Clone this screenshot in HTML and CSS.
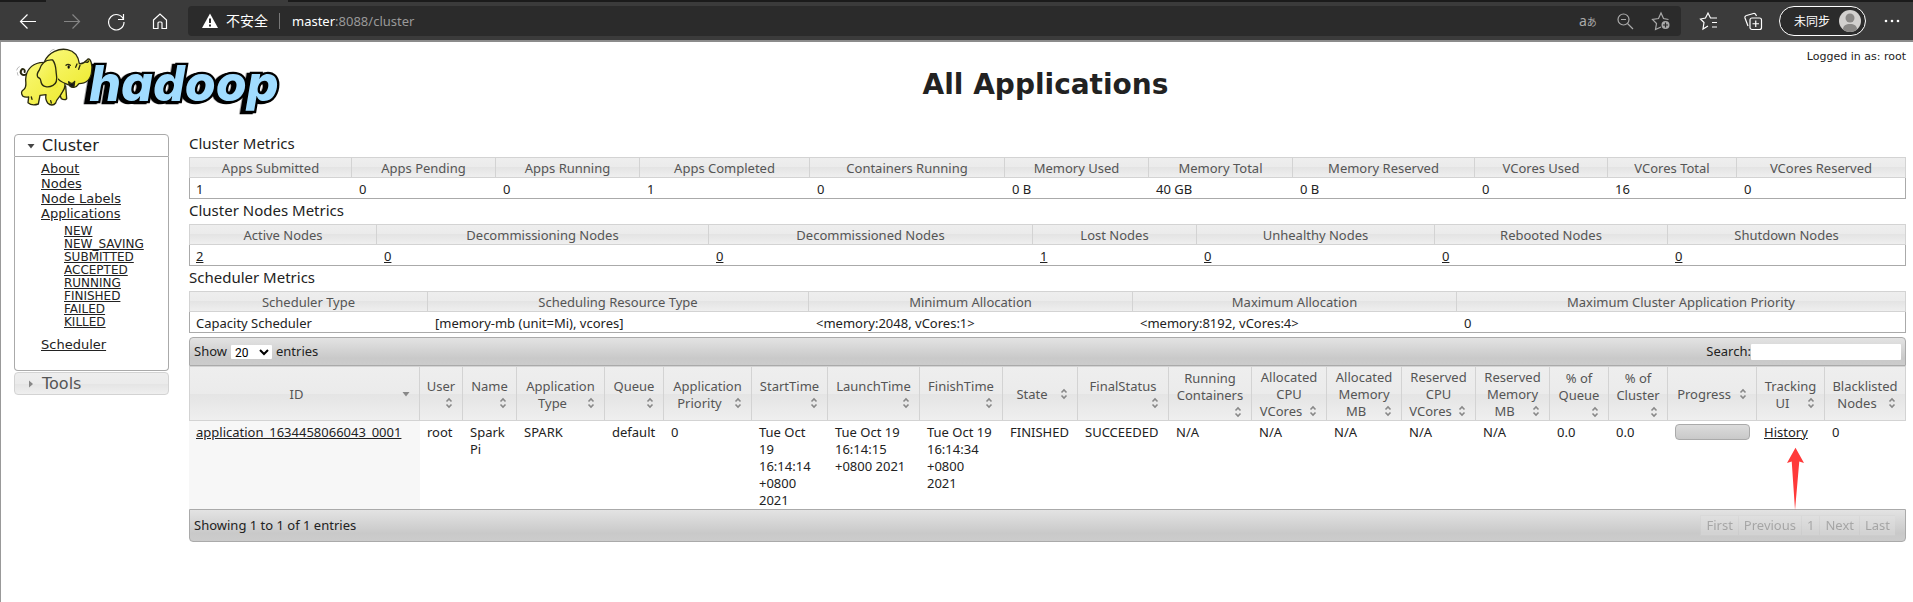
FILE: index.html
```html
<!DOCTYPE html>
<html lang="en">
<head>
<meta charset="utf-8">
<title>All Applications</title>
<link rel="stylesheet" href="styles.css">
</head>
<body>
<svg class="defs" aria-hidden="true">
  <symbol id="sort" viewBox="0 0 16 16"><path d="M5.500 6.500 8 4l2.500 2.500M5.500 9.500 8 12l2.500-2.500" fill="none" stroke="#888" stroke-width="1.600"/></symbol>
  <symbol id="down" viewBox="0 0 16 16"><path d="M4.500 6h7L8 10.500z"/></symbol>
  <symbol id="right" viewBox="0 0 16 16"><path d="M6 4.500v7L10 8z"/></symbol>
</svg>

<div class="browser">
  <div class="tabs"></div>
  <nav class="toolbar" aria-label="Browser">
    <button class="tool" aria-label="Back"><svg viewBox="0 0 20 20"><path d="M18 10.500H2.500M9.500 3.500l-7 7 7 7"/></svg></button>
    <button class="tool dim" aria-label="Forward"><svg viewBox="0 0 20 20"><path d="M2 10.500h15.500M10.500 3.500l7 7-7 7"/></svg></button>
    <button class="tool" aria-label="Reload"><svg viewBox="0 0 20 20"><path d="M17.500 8.500A7.700 7.700 0 1 0 18 11M17.500 3v5.500H12"/></svg></button>
    <button class="tool" aria-label="Home"><svg viewBox="0 0 20 20"><path d="M3.500 9 10 3l6.500 6v8.500h-4.500V12a1 1 0 0 0-1-1H9a1 1 0 0 0-1 1v5.500H3.500z"/></svg></button>
    <div class="address">
      <svg class="warn" viewBox="0 0 18 18"><path fill="#fff" d="M9 1.500 17 16H1z"/><path stroke="#2b2b2b" stroke-width="2" d="M9 6.500V11M9 12.500v2"/></svg>
      <span class="insecure">不安全</span>
      <span class="url"><b>master</b>:8088/cluster</span>
      <button class="tool grey" aria-label="Translate"><span class="translate">a<small>あ</small></span></button>
      <button class="tool grey" aria-label="Zoom out"><svg viewBox="0 0 20 20"><circle cx="8.500" cy="8.500" r="5.500"/><path d="M6 8.500h5M12.500 12.500 18 18"/></svg></button>
      <button class="tool grey" aria-label="Add favorite"><svg viewBox="0 0 20 20"><path d="M10 16l-5.500 2.500 1-6L1.500 8.500l6-1L10 2l2.500 5.500 5 1"/><circle cx="14.500" cy="14" r="4" fill="#aaa" stroke="none"/><path stroke="#2b2b2b" d="M14.500 11.500v5M12 14h5"/></svg></button>
    </div>
    <button class="tool" aria-label="Favorites"><svg viewBox="0 0 20 20"><path d="M9 15l-5 3 1-6.500L1.500 8l5-1L9 2l2.500 5H18M13 11.500h5M13 16h5"/></svg></button>
    <button class="tool" aria-label="Collections"><svg viewBox="0 0 20 20"><rect x="7" y="7" width="11.500" height="11.500" rx="2"/><path d="M12.750 9.500v6.500M9.500 12.750H16M5 15 2 7a2 2 0 0 1 1.500-2.500l7-2a2 2 0 0 1 2.500 1.500l.5 1"/></svg></button>
    <button class="profile"><span>未同步</span><svg viewBox="0 0 22 22"><circle cx="11" cy="11" r="11" fill="#d2d0ce"/><circle cx="11" cy="8" r="4.500" fill="#8a8886"/><path fill="#8a8886" d="M4 19.500c0-4 3-5.500 7-5.500s7 1.500 7 5.500a11 11 0 0 1-14 0z"/></svg></button>
    <button class="tool" aria-label="More"><svg viewBox="0 0 20 20"><g fill="#fff" stroke="none"><circle cx="4" cy="10" r="1.300"/><circle cx="10" cy="10" r="1.300"/><circle cx="16" cy="10" r="1.300"/></g></svg></button>
  </nav>
</div>

<div class="page">
  <header class="head">
    <svg class="logo" viewBox="12 12 816 216" role="img" aria-label="hadoop">
      <defs><linearGradient id="skin" x1="0" y1="0" x2="1" y2="1"><stop offset="0" stop-color="#faf97a"/><stop offset="1" stop-color="#eeea30"/></linearGradient></defs>
      <text class="wordmark" x="238" y="176">hadoop</text>
      <g fill="url(#skin)" stroke="#2a2a10" stroke-width="4" stroke-linejoin="round" stroke-linecap="round">
        <path fill="none" stroke-width="6" d="M50 96C38 104 28 94 34 84c4-6 12-2 10 6"/>
        <path d="M146 148l8 22q10 6 16 0l-3-38z"/>
        <path d="M90 62C62 68 48 88 47 112c0 12 4 22-5 30-8 4-10 12-4 20 6 5 12 4 18 3l-2 17c8 7 22 7 31 4l5-26 18-2c-2 10-2 16 5 25 8 8 18 8 24 0 2-12 10-14 16-26 4-8 12-14 12-28l-10-70z"/>
        <path d="M104 58C116 30 148 18 172 23c20 4 33 20 36 42 14 2 20-8 26-14 8-2 14 18 11 36-2 26-18 38-38 38-8 12-22 16-30 4-10-5-28-8-38-24z"/>
        <path stroke="none" d="M100 66h44v70l-24 14h-20z"/>
        <path fill="#171717" d="M176 119c6 8 14 6 18-1l-2 15c-8 6-16-2-16-14z"/>
        <path d="M128 54C108 52 94 64 88 84c-6 8-10 14-4 22 6 3 8 4 9 14 4 16 22 18 36 10 12-6 13-18 10-34-2-14 0-28-11-42z"/>
        <path fill="none" d="M168 70q6-6 13 0M201 66l-4 10M210 70l-4 12M64 165l2 7M122 176l2 7M226 60q8 3 10-3"/>
        <ellipse cx="176" cy="75" rx="3.500" ry="5" fill="#111" stroke="none"/>
        <path fill="none" stroke="#999" stroke-width="2" d="M120 30q4-8 12-8M20 84q2-8 8-10M24 100q-2-4-2-8"/>
      </g>
    </svg>
    <div class="headline">
      <div class="login">Logged in as: root</div>
      <h1>All Applications</h1>
    </div>
  </header>

  <div class="body">
    <nav class="side" aria-label="Cluster">
      <h3 class="open"><svg><use href="#down"/></svg>Cluster</h3>
      <div class="menu">
        <ul>
          <li><a href="#">About</a></li>
          <li><a href="#">Nodes</a></li>
          <li><a href="#">Node Labels</a></li>
          <li><a href="#">Applications</a>
            <ul class="states">
              <li><a href="#">NEW</a></li>
              <li><a href="#">NEW_SAVING</a></li>
              <li><a href="#">SUBMITTED</a></li>
              <li><a href="#">ACCEPTED</a></li>
              <li><a href="#">RUNNING</a></li>
              <li><a href="#">FINISHED</a></li>
              <li><a href="#">FAILED</a></li>
              <li><a href="#">KILLED</a></li>
            </ul>
          </li>
          <li><a href="#">Scheduler</a></li>
        </ul>
      </div>
      <h3 class="closed"><svg><use href="#right"/></svg>Tools</h3>
    </nav>

    <main>
      <h2>Cluster Metrics</h2>
      <table class="metrics cluster">
        <thead><tr><th>Apps Submitted</th><th>Apps Pending</th><th>Apps Running</th><th>Apps Completed</th><th>Containers Running</th><th>Memory Used</th><th>Memory Total</th><th>Memory Reserved</th><th>VCores Used</th><th>VCores Total</th><th>VCores Reserved</th></tr></thead>
        <tbody><tr><td>1</td><td>0</td><td>0</td><td>1</td><td>0</td><td>0 B</td><td>40 GB</td><td>0 B</td><td>0</td><td>16</td><td>0</td></tr></tbody>
      </table>
      <h2>Cluster Nodes Metrics</h2>
      <table class="metrics nodes">
        <thead><tr><th>Active Nodes</th><th>Decommissioning Nodes</th><th>Decommissioned Nodes</th><th>Lost Nodes</th><th>Unhealthy Nodes</th><th>Rebooted Nodes</th><th>Shutdown Nodes</th></tr></thead>
        <tbody><tr><td><a href="#">2</a></td><td><a href="#">0</a></td><td><a href="#">0</a></td><td><a href="#">1</a></td><td><a href="#">0</a></td><td><a href="#">0</a></td><td><a href="#">0</a></td></tr></tbody>
      </table>
      <h2>Scheduler Metrics</h2>
      <table class="metrics scheduler">
        <thead><tr><th>Scheduler Type</th><th>Scheduling Resource Type</th><th>Minimum Allocation</th><th>Maximum Allocation</th><th>Maximum Cluster Application Priority</th></tr></thead>
        <tbody><tr><td>Capacity Scheduler</td><td>[memory-mb (unit=Mi), vcores]</td><td>&lt;memory:2048, vCores:1&gt;</td><td>&lt;memory:8192, vCores:4&gt;</td><td>0</td></tr></tbody>
      </table>

      <section class="apps-box">
        <div class="bar top">
          <label class="length">Show <select><option>20</option></select> entries</label>
          <label class="search">Search:<input type="text"></label>
        </div>
        <table class="apps">
          <thead><tr>
            <th>ID<svg><use href="#down"/></svg></th>
            <th>User<svg><use href="#sort"/></svg></th>
            <th>Name<svg><use href="#sort"/></svg></th>
            <th>Application Type<svg><use href="#sort"/></svg></th>
            <th>Queue<svg><use href="#sort"/></svg></th>
            <th>Application Priority<svg><use href="#sort"/></svg></th>
            <th>StartTime<svg><use href="#sort"/></svg></th>
            <th>LaunchTime<svg><use href="#sort"/></svg></th>
            <th>FinishTime<svg><use href="#sort"/></svg></th>
            <th>State<svg><use href="#sort"/></svg></th>
            <th>FinalStatus<svg><use href="#sort"/></svg></th>
            <th>Running Containers<svg><use href="#sort"/></svg></th>
            <th>Allocated CPU VCores<svg><use href="#sort"/></svg></th>
            <th>Allocated Memory MB<svg><use href="#sort"/></svg></th>
            <th>Reserved CPU VCores<svg><use href="#sort"/></svg></th>
            <th>Reserved Memory MB<svg><use href="#sort"/></svg></th>
            <th>% of Queue<svg><use href="#sort"/></svg></th>
            <th>% of Cluster<svg><use href="#sort"/></svg></th>
            <th>Progress<svg><use href="#sort"/></svg></th>
            <th>Tracking UI<svg><use href="#sort"/></svg></th>
            <th>Blacklisted Nodes<svg><use href="#sort"/></svg></th>
          </tr></thead>
          <tbody><tr>
            <td><a href="#">application_1634458066043_0001</a></td>
            <td>root</td><td>Spark Pi</td><td>SPARK</td><td>default</td><td>0</td>
            <td>Tue Oct 19 16:14:14 +0800 2021</td><td>Tue Oct 19 16:14:15 +0800 2021</td><td>Tue Oct 19 16:14:34 +0800 2021</td>
            <td>FINISHED</td><td>SUCCEEDED</td><td>N/A</td><td>N/A</td><td>N/A</td><td>N/A</td><td>N/A</td><td>0.0</td><td>0.0</td>
            <td><div class="progress"></div></td>
            <td class="tracking"><a href="#">History</a><svg class="arrow" viewBox="0 0 18 66"><path fill="#ff3a3a" d="M9 0l9 16-5-1.500L8.500 66 5 14.500 0 16z"/></svg></td>
            <td>0</td>
          </tr></tbody>
        </table>
        <div class="bar bottom">
          <span>Showing 1 to 1 of 1 entries</span>
          <div class="pages"><button disabled>First</button><button disabled>Previous</button><button disabled>1</button><button disabled>Next</button><button disabled>Last</button></div>
        </div>
      </section>
    </main>
  </div>
</div>
</body>
</html>
```

FILE: styles.css
```css
* { box-sizing: border-box; }
body { margin: 0; background: #fff; color: #222; font: 13px/17px "Noto Sans", "Noto Sans CJK SC", sans-serif; }
a { color: #222; text-decoration: underline; }
button { font: inherit; }
.defs { position: absolute; width: 0; height: 0; }

/* Browser bar */
.browser { background: #3b3b3b; border-bottom: 2px solid #8c8c8c; }
.tabs { height: 2px; background: linear-gradient(to right, #1b1b1b 46px, #3b3b3b 46px, #3b3b3b 288px, #1b1b1b 288px); }
.toolbar { display: flex; align-items: center; gap: 24px; padding: 4px 11px 4px 18px; }
.tool { flex: none; width: 20px; height: 20px; padding: 0; border: 0; background: none; color: #fff; }
.tool svg { display: block; width: 20px; height: 20px; fill: none; stroke: currentColor; stroke-width: 1.2; }
.dim { color: #858585; }
.grey { color: #aaa; }
.address { flex: 1; display: flex; align-items: center; height: 30px; margin: 0 -6px 0 -6px; padding: 0 10px 0 13px; border-radius: 4px; background: #2b2b2b; color: #999; }
.address .tool { margin-left: 16px; }
.warn { width: 18px; height: 18px; margin-right: 7px; }
.insecure { padding-right: 11px; border-right: 1px solid #777; color: #fff; font-size: 14px; line-height: 16px; }
.url { flex: 1; padding-left: 12px; }
.url b { color: #fff; font-weight: 400; }
.translate { display: flex; align-items: baseline; font-size: 14px; }
.translate small { font-size: 10px; }
.profile { display: flex; align-items: center; justify-content: space-between; width: 87px; height: 30px; margin: 0 -8px; padding: 0 4px 0 14px; border: 1px solid #fff; border-radius: 15px; background: #2b2b2b; color: #fff; font-size: 12px; white-space: nowrap; }
.profile svg { width: 22px; height: 22px; }

/* Page */
.page { min-height: calc(100vh - 42px); padding: 0 7px 0 13px; border-left: 1px solid #999; }
.head, .body { display: grid; grid-template-columns: 155px minmax(0, 1fr); column-gap: 20px; }
.head { height: 90px; }
.logo { width: 272px; height: 72px; margin-top: 4px; }
.wordmark { font: italic 800 150px Inter, sans-serif; fill: #a0dcff; stroke: #000; stroke-width: 14px; paint-order: stroke; filter: drop-shadow(-10px 3px 0 #000); }
.login { padding-top: 8px; text-align: right; font: 11px/14px "DejaVu Sans", sans-serif; }
h1 { margin: 0; padding-right: 4px; text-align: center; font: bold 28px/42px "DejaVu Sans", sans-serif; }

/* Sidebar */
.side { padding-top: 2px; font: 13px/15px "DejaVu Sans", sans-serif; }
.side h3 { display: flex; align-items: center; gap: 3px; height: 23px; margin: 0; padding-left: 8px; border: 1px solid #aaa; font-size: 16px; font-weight: 400; }
.side h3 svg { width: 16px; height: 16px; fill: #454545; }
.side .open { border-radius: 4px 4px 0 0; }
.side .closed { margin-top: 1px; border-color: #d3d3d3; border-radius: 4px; background: linear-gradient(#eee, #ebebeb 50%, #e4e4e4 50%, #efefef); color: #555; }
.side .closed svg { fill: #888; }
.menu { padding: 4px 0 18px 26px; border: 1px solid #aaa; border-top: 0; border-radius: 0 0 4px 4px; }
.menu ul { margin: 0; padding: 0; list-style: none; }
.menu .states { padding: 4px 0 8px 23px; font-size: 12px; line-height: 13px; }

/* Tables */
h2 { margin: 0; padding-bottom: 3px; font-size: 15px; line-height: 22px; font-weight: 400; }
table { width: 100%; border-collapse: separate; border-spacing: 0; table-layout: fixed; }
th { padding: 2px 5px 0; border: solid #d3d3d3; border-width: 1px 1px 1px 0; background: linear-gradient(#eee, #ebebeb 50%, #e4e4e4 50%, #efefef); color: #555; font-weight: 400; text-align: center; }
th:first-child { border-left-width: 1px; }
td { padding: 3px 7px 0; vertical-align: top; text-align: left; }
.metrics td { border-bottom: 1px solid #aaa; }
.metrics td:first-child { padding-left: 6px; border-left: 1px solid #aaa; }
.metrics td:last-child { border-right: 1px solid #aaa; }
.cluster th:nth-child(1) { width: 163px; }
.cluster th:nth-child(2), .cluster th:nth-child(3), .cluster th:nth-child(6), .cluster th:nth-child(7) { width: 144px; }
.cluster th:nth-child(4) { width: 170px; }
.cluster th:nth-child(5) { width: 195px; }
.cluster th:nth-child(8) { width: 182px; }
.cluster th:nth-child(9) { width: 133px; }
.cluster th:nth-child(10) { width: 129px; }
.nodes th:nth-child(1) { width: 188px; }
.nodes th:nth-child(2) { width: 332px; }
.nodes th:nth-child(3) { width: 324px; }
.nodes th:nth-child(4) { width: 164px; }
.nodes th:nth-child(5) { width: 238px; }
.nodes th:nth-child(6) { width: 233px; }
.scheduler th:nth-child(1) { width: 239px; }
.scheduler th:nth-child(2) { width: 381px; }
.scheduler th:nth-child(3), .scheduler th:nth-child(4) { width: 324px; }

/* Applications */
.apps-box { margin-top: 4px; }
.bar { display: flex; align-items: center; justify-content: space-between; border: 1px solid #aaa; background: linear-gradient(#e3e3e3, #c9c9c9 75%, #cccccc); }
.top { height: 29px; padding: 0 4px; border-radius: 4px 4px 0 0; }
.bottom { height: 33px; padding: 0 10px 0 4px; border-radius: 0 0 4px 4px; }
.length { display: flex; align-items: center; gap: 4px; }
.bar select { width: 41px; height: 14px; padding: 0; border: 0; border-radius: 1px; background: #fff; color: #000; font: 12px Roboto, sans-serif; }
.search { display: flex; align-items: center; }
.search input { width: 150px; height: 16px; padding: 0 2px; border: 0; border-radius: 1px; background: #fff; font: inherit; }
.apps th { height: 55px; }
.apps th svg { float: right; width: 16px; height: 16px; fill: #888; }
.apps td:first-child { background: #f7f7f7; }
.apps th:nth-child(1) { width: 231px; }
.apps th:nth-child(2) { width: 43px; }
.apps th:nth-child(3) { width: 54px; }
.apps th:nth-child(4), .apps th:nth-child(6) { width: 88px; }
.apps th:nth-child(5), .apps th:nth-child(17), .apps th:nth-child(18) { width: 59px; }
.apps th:nth-child(7) { width: 76px; }
.apps th:nth-child(8) { width: 92px; }
.apps th:nth-child(9), .apps th:nth-child(12) { width: 83px; }
.apps th:nth-child(10), .apps th:nth-child(13), .apps th:nth-child(14) { width: 75px; }
.apps th:nth-child(11) { width: 91px; }
.apps th:nth-child(15), .apps th:nth-child(16) { width: 74px; }
.apps th:nth-child(19) { width: 89px; }
.apps th:nth-child(20) { width: 68px; }
.progress { height: 16px; border: 1px solid #aaa; border-radius: 4px; background: linear-gradient(#dcdcdc, #c9c9c9); }
.tracking { position: relative; }
.arrow { position: absolute; left: 30px; top: 25px; width: 17px; height: 66px; }
.pages { display: flex; }
.pages button { height: 21px; padding: 0 5px; border: 1px solid #d3d3d3; border-width: 1px 0 1px 1px; background: #e6e6e6; color: #555; opacity: 0.35; }
```
